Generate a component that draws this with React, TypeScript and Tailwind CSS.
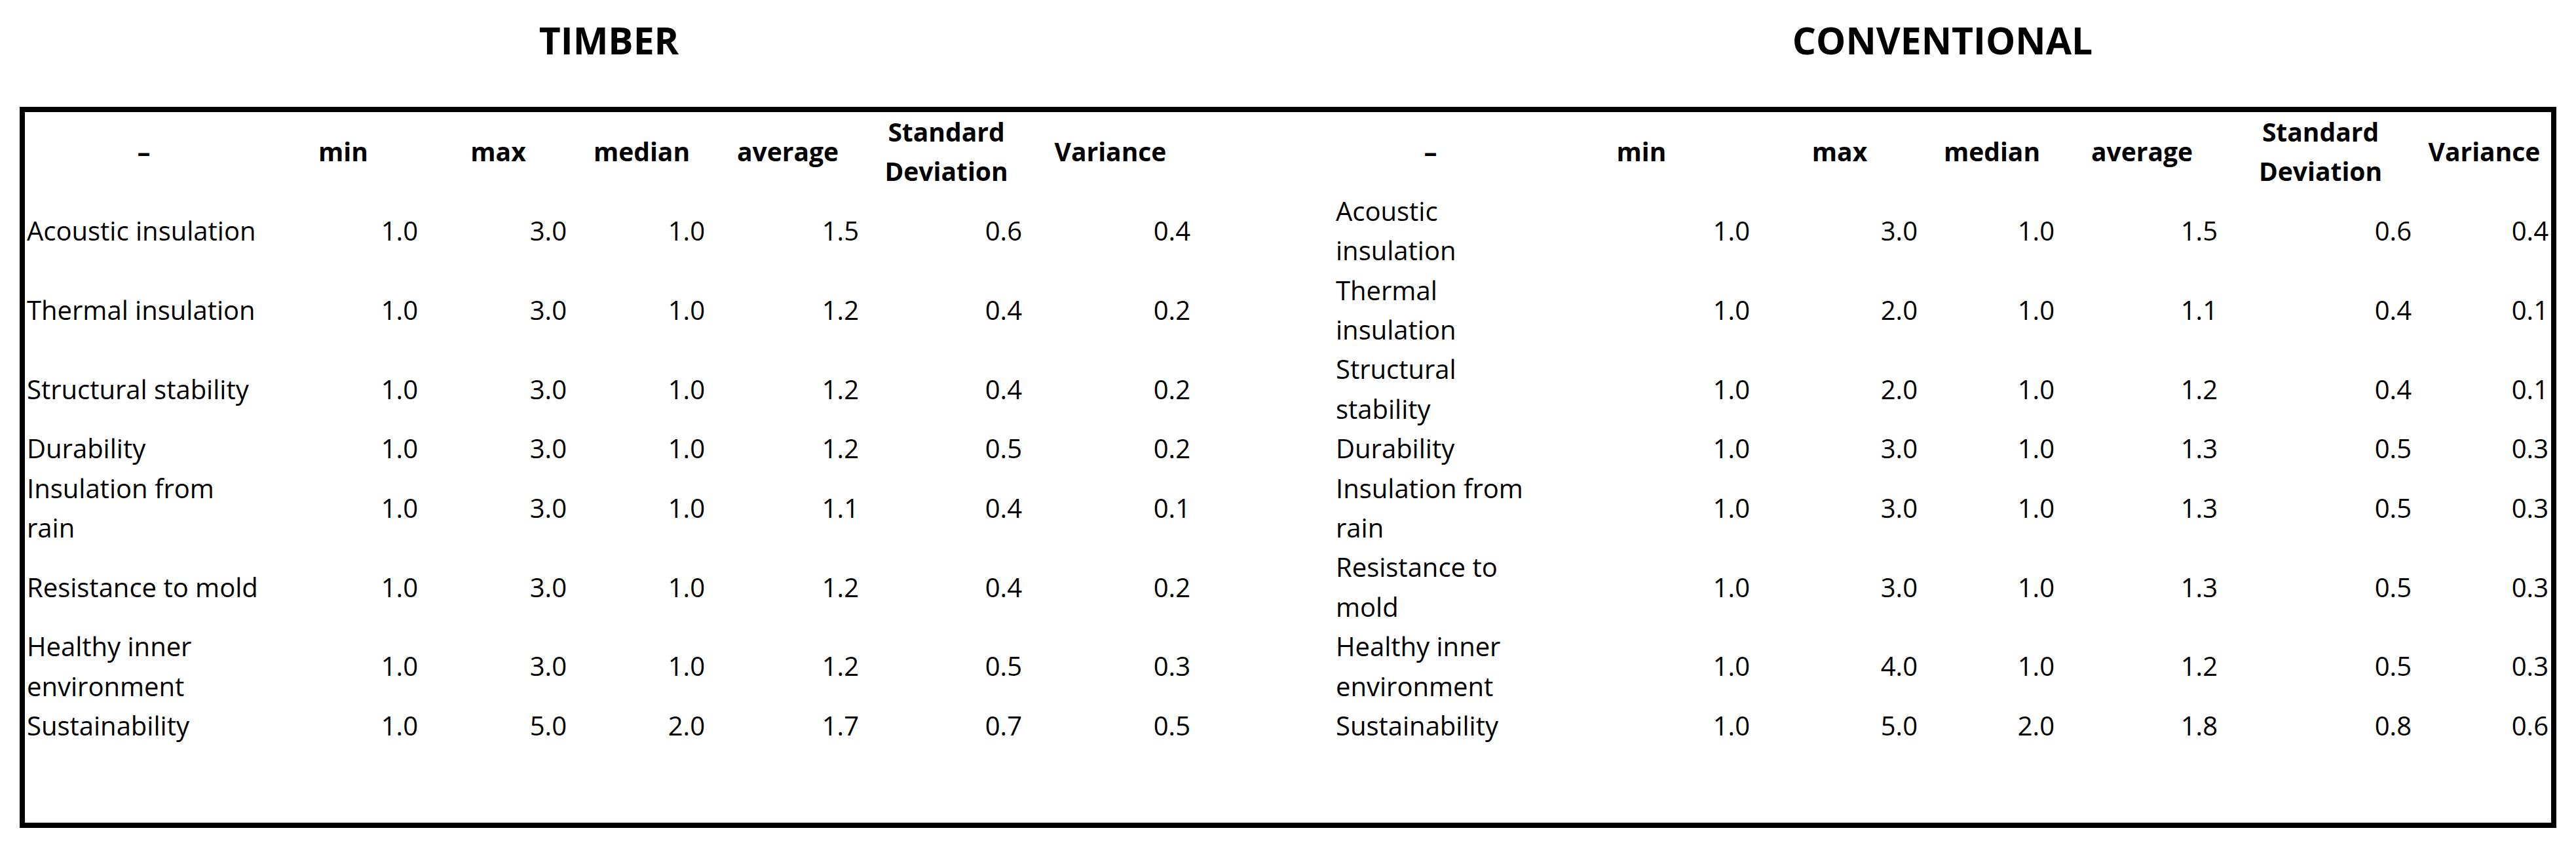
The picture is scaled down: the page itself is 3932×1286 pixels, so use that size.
type Row = {
  left: string[];
  right: string[];
  timber: string[];
  conventional: string[];
};

const ROWS: Row[] = [
  { left: ['Acoustic insulation'], right: ['Acoustic', 'insulation'], timber: ['1.0', '3.0', '1.0', '1.5', '0.6', '0.4'], conventional: ['1.0', '3.0', '1.0', '1.5', '0.6', '0.4'] },
  { left: ['Thermal insulation'], right: ['Thermal', 'insulation'], timber: ['1.0', '3.0', '1.0', '1.2', '0.4', '0.2'], conventional: ['1.0', '2.0', '1.0', '1.1', '0.4', '0.1'] },
  { left: ['Structural stability'], right: ['Structural', 'stability'], timber: ['1.0', '3.0', '1.0', '1.2', '0.4', '0.2'], conventional: ['1.0', '2.0', '1.0', '1.2', '0.4', '0.1'] },
  { left: ['Durability'], right: ['Durability'], timber: ['1.0', '3.0', '1.0', '1.2', '0.5', '0.2'], conventional: ['1.0', '3.0', '1.0', '1.3', '0.5', '0.3'] },
  { left: ['Insulation from', 'rain'], right: ['Insulation from', 'rain'], timber: ['1.0', '3.0', '1.0', '1.1', '0.4', '0.1'], conventional: ['1.0', '3.0', '1.0', '1.3', '0.5', '0.3'] },
  { left: ['Resistance to mold'], right: ['Resistance to', 'mold'], timber: ['1.0', '3.0', '1.0', '1.2', '0.4', '0.2'], conventional: ['1.0', '3.0', '1.0', '1.3', '0.5', '0.3'] },
  { left: ['Healthy inner', 'environment'], right: ['Healthy inner', 'environment'], timber: ['1.0', '3.0', '1.0', '1.2', '0.5', '0.3'], conventional: ['1.0', '4.0', '1.0', '1.2', '0.5', '0.3'] },
  { left: ['Sustainability'], right: ['Sustainability'], timber: ['1.0', '5.0', '2.0', '1.7', '0.7', '0.5'], conventional: ['1.0', '5.0', '2.0', '1.8', '0.8', '0.6'] },
];

const HEADERS: string[][] = [['min'], ['max'], ['median'], ['average'], ['Standard', 'Deviation'], ['Variance']];

function Lines({ lines }: { lines: string[] }) {
  return (
    <span className="whitespace-nowrap">
      {lines.map((l, i) => (
        <span key={i}>
          {i > 0 && <br />}
          {l}
        </span>
      ))}
    </span>
  );
}

function HeaderCells() {
  return (
    <>
      <div className="flex items-center justify-center font-bold">–</div>
      {HEADERS.map((h, i) => (
        <div key={i} className="flex items-center justify-center text-center font-bold text-[39px]">
          <Lines lines={h} />
        </div>
      ))}
    </>
  );
}

function ValueCells({ label, values }: { label: string[]; values: string[] }) {
  return (
    <>
      <div className="flex items-center pl-[3px]">
        <Lines lines={label} />
      </div>
      {values.map((v, i) => (
        <div key={i} className={`flex items-center justify-end ${i === 5 ? 'pr-[4px]' : 'pr-[9px]'}`}>
          {v}
        </div>
      ))}
    </>
  );
}

export default function App() {
  return (
    <div className="w-[3932px] h-[1286px] bg-white text-black font-['Open_Sans','Noto_Sans',sans-serif] overflow-hidden">
      {/* titles */}
      <div className="flex h-[163px] pl-[38px] pt-[32px] text-[57px] leading-[58px] font-bold">
        <div className="w-[1783px] text-center">TIMBER</div>
        <div className="w-[215px]" />
        <div className="w-[1858px] text-center">CONVENTIONAL</div>
      </div>

      {/* table box */}
      <div className="ml-[30px] w-[3872px] h-[1100px] border-[8px] border-black">
        <div className="grid grid-cols-[363px_246px_227px_211px_235px_249px_252px_215px_295px_349px_256px_209px_249px_296px_204px] text-[40px] leading-[60.4px]">
          <HeaderCells />
          <div />
          <HeaderCells />
          {ROWS.map((r, i) => (
            <div key={i} className="contents">
              <ValueCells label={r.left} values={r.timber} />
              <div />
              <ValueCells label={r.right} values={r.conventional} />
            </div>
          ))}
        </div>
      </div>
    </div>
  );
}
